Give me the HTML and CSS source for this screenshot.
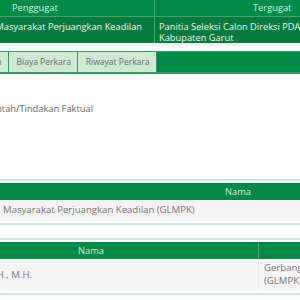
FILE: index.html
```html
<!DOCTYPE html>
<html lang="en">
<head>
    <meta charset="UTF-8">
    <title>Detail Perkara</title>
    <link rel="stylesheet" href="styles.css">
</head>
<body>
    <div class="page">
        <div class="pihak-table">
            <div class="pihak-head penggugat">Penggugat</div>
            <div class="pihak-head tergugat">Tergugat</div>
            <div class="pihak-cell penggugat"><span>Gerakan Lembaga Masyarakat Perjuangkan Keadilan</span></div>
            <div class="pihak-cell tergugat">Panitia Seleksi Calon Direksi PDAM Tirta Intan Kabupaten Garut</div>
        </div>

        <div class="tabs">
            <div class="tab">Putusan</div>
            <div class="tab">Biaya Perkara</div>
            <div class="tab">Riwayat Perkara</div>
        </div>

        <div class="content">
            <p class="klasifikasi"><span>Perbuatan Melawan Hukum oleh Pemerintah/Tindakan Faktual</span></p>
        </div>

        <div class="panel">
            <div class="grid-table one-col">
                <div class="th nama-1">Nama</div>
                <div class="td">Masyarakat Perjuangkan Keadilan (GLMPK)</div>
            </div>
        </div>

        <div class="panel">
            <div class="grid-table two-col">
                <div class="th">Nama</div>
                <div class="th">Pihak</div>
                <div class="td nama-kuasa"><span>Dadan Hidayat, S.H., M.H.</span></div>
                <div class="td pihak">Gerbang Lembaga Masyarakat Perjuangkan Keadilan (GLMPK)</div>
            </div>
        </div>
    </div>
</body>
</html>
```

FILE: styles.css
```css
* {
    margin: 0;
    padding: 0;
    box-sizing: border-box;
}

body {
    font-family: "Open Sans", "DejaVu Sans", sans-serif;
    font-size: 9.3px;
    color: #777;
    background: #fff;
    width: 300px;
    height: 300px;
    overflow: hidden;
}

.page {
    width: 300px;
    overflow: hidden;
}

/* pihak (penggugat / tergugat) */
.pihak-table {
    display: grid;
    grid-template-columns: 160px 240px;
    margin-left: -6px;
    width: 400px;
    border-bottom: 3px solid #eef0ee;
}

.pihak-head {
    background: #008b47;
    color: #dff3e4;
    height: 16px;
    line-height: 16px;
}

.pihak-head.penggugat {
    padding-left: 18px;
}

.pihak-head.tergugat {
    padding-left: 98px;
    border-left: 1px solid #3fa96d;
}

.pihak-cell {
    background: #077b3e;
    color: #eef8f1;
    padding: 4px 4px;
    height: 27px;
    line-height: 11px;
    border-top: 1px solid #3fa96d;
}

/* long name overflows out to the left, end stays at the column edge */
.pihak-cell.penggugat {
    display: flex;
    justify-content: flex-end;
    align-items: flex-start;
    padding-right: 12px;
    white-space: nowrap;
}

.pihak-cell.tergugat {
    border-left: 1px solid #3fa96d;
    padding-right: 14px;
}

/* tabs */
.tabs {
    display: flex;
    margin-top: 5px;
    margin-left: -39px;
    height: 23px;
    background: #008b47;
    border-top: 1px solid #2e9e5e;
    border-bottom: 2px solid #2e9e5e;
    width: 339px;
}

.tab {
    background: #cfe9d3;
    color: #5f6f63;
    border-right: 1px solid #2e9e5e;
    padding: 0 6px 0 8px;
    font-size: 8.5px;
    line-height: 20px;
    white-space: nowrap;
}

.content {
    height: 105px;
    padding-top: 28px;
}

.klasifikasi {
    display: flex;
    justify-content: flex-end;
    width: 93px;
    white-space: nowrap;
    color: #666;
}

/* tables */
.panel {
    border-top: 2px solid #cde8d5;
    border-bottom: 2px solid #cde8d5;
    padding: 2px 0 2px;
    margin-bottom: 13px;
}

.grid-table {
    display: grid;
}

.grid-table.one-col {
    grid-template-columns: 1fr;
}

.grid-table.two-col {
    grid-template-columns: 258px 1fr;
}

.th {
    background: #008b47;
    color: #d8efdd;
    height: 17px;
    line-height: 17px;
    text-align: center;
}

.th.nama-1 {
    text-align: left;
    padding-left: 225px;
}

.two-col .th:first-child {
    text-align: left;
    padding-left: 78px;
}

.two-col .th + .th {
    border-left: 1px solid #3fa96d;
}

.td {
    background: #f4f4f4;
    padding: 4px 3px;
    line-height: 12px;
    font-size: 9.6px;
    border-bottom: 1px dotted #fafafa;
    white-space: nowrap;
}

.td.nama-kuasa {
    display: flex;
    justify-content: flex-end;
    align-items: center;
    padding-right: 226px;
    height: 32px;
}

.td.pihak {
    border-left: 1px dotted #ddd;
    padding: 2px 3px 2px 5px;
    line-height: 13px;
    white-space: normal;
    width: 260px;
}
```
